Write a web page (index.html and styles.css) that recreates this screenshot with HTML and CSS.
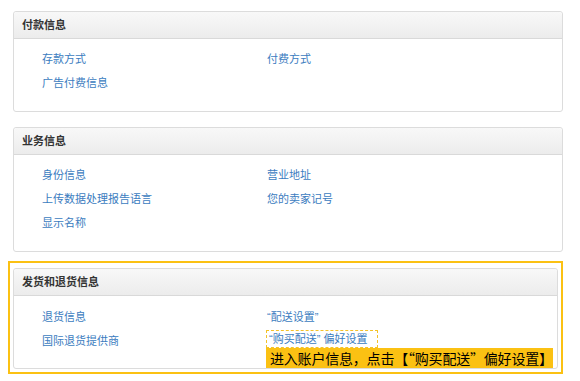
FILE: index.html
```html
<!DOCTYPE html>
<html lang="zh-CN">
<head>
  <meta charset="UTF-8">
  <meta name="viewport" content="width=device-width, initial-scale=1.0">
  <title>账户信息</title>
  <link rel="stylesheet" href="styles.css">
</head>
<body>
  <div class="page">
    <div class="panel">
      <div class="panel-head">付款信息</div>
      <div class="panel-body">
        <a href="#">存款方式</a>
        <a href="#">付费方式</a>
        <a href="#">广告付费信息</a>
      </div>
    </div>

    <div class="panel">
      <div class="panel-head">业务信息</div>
      <div class="panel-body">
        <a href="#">身份信息</a>
        <a href="#">营业地址</a>
        <a href="#">上传数据处理报告语言</a>
        <a href="#">您的卖家记号</a>
        <a href="#">显示名称</a>
      </div>
    </div>

    <div class="highlight">
      <div class="panel">
        <div class="panel-head">发货和退货信息</div>
        <div class="panel-body">
          <a href="#">退货信息</a>
          <a href="#">“配送设置”</a>
          <a href="#">国际退货提供商</a>
          <div class="marked">
            <a href="#">“购买配送” 偏好设置</a>
            <div class="note">进入账户信息，点击【“购买配送”偏好设置】</div>
          </div>
        </div>
      </div>
    </div>
  </div>
</body>
</html>
```

FILE: styles.css
```css
body {
  margin: 0;
  background-color: #fff;
  font-family: "Liberation Sans", "Noto Sans CJK SC", sans-serif;
  font-size: 11px;
  color: #333;
}

.page {
  padding: 11px 17px 0 8px;
}

.panel {
  margin-left: 5px;
  margin-bottom: 15px;
  border: 1px solid #dcdcdc;
  border-radius: 3px;
  background-color: #fff;
}

.panel-head {
  height: 26px;
  line-height: 26px;
  padding-left: 8px;
  font-weight: bold;
  color: #333;
  background: linear-gradient(#f8f8f8, #ececec);
  border-bottom: 1px solid #d9d9d9;
  border-radius: 3px 3px 0 0;
}

.panel-body {
  display: grid;
  grid-template-columns: 225px 1fr;
  grid-auto-rows: 24px;
  align-items: center;
  padding: 7px 0 17px 28px;
}

.panel-body a {
  color: #3b7cc0;
  text-decoration: none;
}

.highlight {
  border: 2px solid #fbc113;
  padding: 5px 3px 3px 0;
  margin-top: -6px;
}

.highlight .panel {
  margin-left: 3px;
  margin-bottom: 0;
}

.highlight .panel-body {
  padding-top: 8px;
  padding-bottom: 16px;
}

.marked {
  position: relative;
  justify-self: start;
  margin: -3px 0 0 -1px;
  padding: 2px 10px 2px 2px;
  border: 1px dashed #f3c22a;
  line-height: 12px;
}

.note {
  position: absolute;
  left: -1px;
  top: 100%;
  margin-top: 1px;
  width: 283px;
  height: 20px;
  padding-left: 4px;
  line-height: 20px;
  background-color: #fbc113;
  color: #000;
  font-family: "Noto Sans CJK SC", sans-serif;
  font-size: 14px;
  letter-spacing: -0.2px;
  white-space: nowrap;
}
```
